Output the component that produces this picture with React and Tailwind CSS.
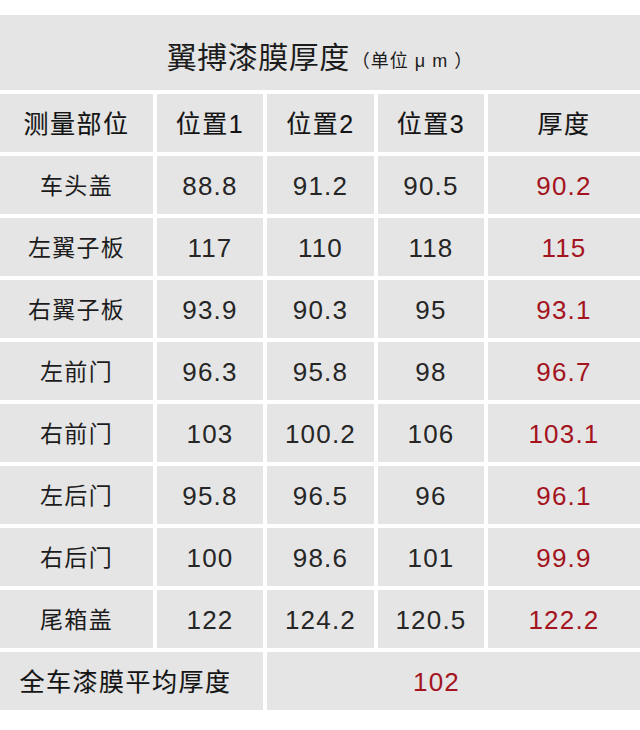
const rows = [
  ["车头盖", "88.8", "91.2", "90.5", "90.2"],
  ["左翼子板", "117", "110", "118", "115"],
  ["右翼子板", "93.9", "90.3", "95", "93.1"],
  ["左前门", "96.3", "95.8", "98", "96.7"],
  ["右前门", "103", "100.2", "106", "103.1"],
  ["左后门", "95.8", "96.5", "96", "96.1"],
  ["右后门", "100", "98.6", "101", "99.9"],
  ["尾箱盖", "122", "124.2", "120.5", "122.2"],
];

const font = { fontFamily: '"Liberation Sans", "Noto Sans CJK SC", sans-serif' };

function Cell({ children, className = "" }) {
  return (
    <div className={`flex h-[58px] items-center justify-center bg-[#e5e5e5] pt-[3px] ${className}`}>
      {children}
    </div>
  );
}

// header-ish cells are a touch heavier than the body text
const head = "text-[25px] tracking-[1.5px] text-[#141414] [-webkit-text-stroke:0.15px_#141414]";
const num = "text-[26px] tracking-[1.2px] text-[#262626]";
const red = "text-[26px] tracking-[1.2px] text-[#a3141e]";

export default function App() {
  return (
    <div className="h-[730px] w-[640px] bg-white pt-[15px] text-[#1c1c1c]" style={font}>
      <div className="flex h-[75px] items-center justify-center bg-[#e5e5e5] pt-[11px]">
        <span className="text-[30px] leading-none tracking-[0.5px]">翼搏漆膜厚度</span>
        <span className="ml-[2px] mt-[6px] text-[18px] leading-none tracking-[1px]">
          （单位 μ m ）
        </span>
      </div>

      <div className="mt-[4px] grid grid-cols-[153px_106px_107px_106px_1fr] gap-[4px]">
        <Cell className={head}>测量部位</Cell>
        <Cell className={head}>位置1</Cell>
        <Cell className={head}>位置2</Cell>
        <Cell className={head}>位置3</Cell>
        <Cell className={head}>厚度</Cell>

        {rows.map((r) => (
          <div key={r[0]} className="contents">
            <Cell className="text-[23px] tracking-[1.3px] text-[#1c1c1c]">{r[0]}</Cell>
            <Cell className={num}>{r[1]}</Cell>
            <Cell className={num}>{r[2]}</Cell>
            <Cell className={num}>{r[3]}</Cell>
            <Cell className={red}>{r[4]}</Cell>
          </div>
        ))}

        <Cell className={`col-span-2 pr-[12px] ${head}`}>全车漆膜平均厚度</Cell>
        <Cell className={`col-span-3 pr-[34px] ${red}`}>102</Cell>
      </div>
    </div>
  );
}
